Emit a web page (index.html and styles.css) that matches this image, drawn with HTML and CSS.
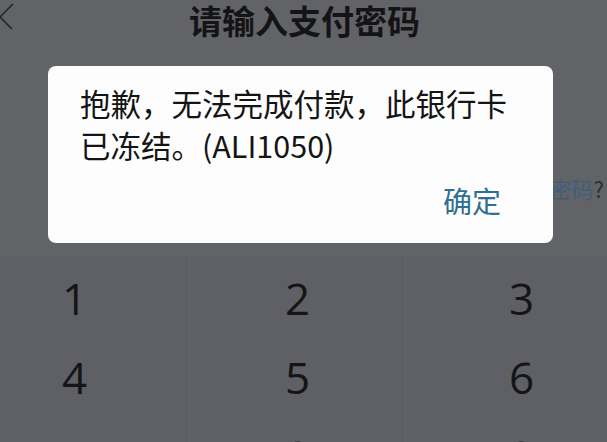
FILE: index.html
```html
<!DOCTYPE html>
<html lang="zh-CN">
<head>
<meta charset="UTF-8">
<meta name="viewport" content="width=device-width, initial-scale=1.0">
<title>请输入支付密码</title>
<link rel="stylesheet" href="styles.css">
</head>
<body>

<div class="page">
    <div class="header">
        <svg class="back" width="14" height="40" viewBox="0 0 14 40">
            <polyline points="13,4 0,17 12,29" fill="none" stroke="#1e1f22" stroke-width="1.4"/>
        </svg>
        <h1>请输入支付密码</h1>
    </div>

    <div class="pwd-box"></div>

    <div class="forgot"><span class="link">忘记密码</span>?</div>

    <div class="keypad">
        <div class="key">1</div>
        <div class="key">2</div>
        <div class="key">3</div>
        <div class="key">4</div>
        <div class="key">5</div>
        <div class="key">6</div>
        <div class="key">7</div>
        <div class="key">8</div>
        <div class="key">9</div>
    </div>

    <!-- error dialog over the dimmed page -->
    <div class="dialog">
        <p class="message">抱歉，无法完成付款，此银行卡已冻结。(ALI1050)</p>
        <div class="actions">
            <a href="#" class="ok">确定</a>
        </div>
    </div>
</div>

</body>
</html>
```

FILE: styles.css
```css
body {
    margin: 0;
    padding: 0;
    background-color: #616266;
    font-family: "Noto Sans CJK SC", "Noto Sans", sans-serif;
}
.page {
    position: relative;
    width: 607px;
    height: 442px;
    overflow: hidden;
    background-color: #626367;
}
.header {
    display: flex;
    align-items: center;
    height: 40px;
}
.back {
    flex: none;
}
.header h1 {
    flex: 1;
    margin: 0;
    padding-right: 12px;
    text-align: center;
    font-size: 33px;
    line-height: 38px;
    font-weight: bold;
    color: #141416;
}
.pwd-box {
    height: 130px;
}
.forgot {
    height: 36px;
    line-height: 36px;
    text-align: right;
    padding-right: 3px;
    font-size: 22px;
    color: #2c2f35;
}
.forgot .link {
    color: #3f5e7c;
}
.keypad {
    display: grid;
    grid-template-columns: 190px 216px 1fr;
    grid-auto-rows: 79px;
    margin-top: 50px;
    background-color: #5f6065;
}
.key {
    display: flex;
    align-items: center;
    justify-content: center;
    padding-top: 4px;
    font-family: "Open Sans", "Noto Sans", sans-serif;
    font-size: 44px;
    color: #151517;
    border-right: 1px solid #66676b;
}
.key:nth-child(3n+1) {
    padding-right: 40px;
}
.key:nth-child(3n) {
    padding-left: 30px;
    border-right: none;
}
.dialog {
    position: absolute;
    left: 48px;
    top: 66px;
    width: 505px;
    box-sizing: border-box;
    padding: 16px 28px 23px 32px;
    background-color: #fdfdfd;
    border-radius: 8px;
}
.message {
    margin: 0;
    font-size: 30.5px;
    line-height: 42px;
    color: #141414;
}
.actions {
    display: flex;
    justify-content: flex-end;
    margin-top: 14px;
    padding-right: 24px;
}
.ok {
    font-size: 29px;
    line-height: 40px;
    color: #2e6f92;
    text-decoration: none;
}
```
